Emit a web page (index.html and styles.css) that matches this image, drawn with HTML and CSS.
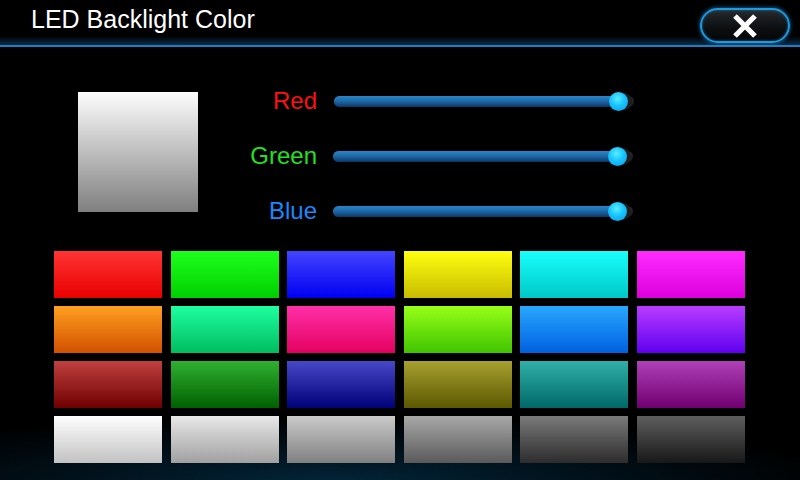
FILE: index.html
```html
<!DOCTYPE html>
<html>
<head>
<meta charset="utf-8">
<link rel="stylesheet" href="styles.css">
</head>
<body>
<div class="screen">
  <header class="header">
    <h1 class="title">LED Backlight Color</h1>
    <button class="close" aria-label="Close">
      <svg width="26" height="24" viewBox="0 0 26 24"><path d="M3 2 L23 22 M23 2 L3 22" stroke="#fff" stroke-width="5.2" stroke-linecap="butt"/></svg>
    </button>
  </header>
  <section class="top">
    <div class="preview"></div>
    <div class="sliders">
      <div class="srow"><span class="label red">Red</span><div class="track"><div class="fill"></div><div class="knob"></div></div></div>
      <div class="srow"><span class="label green">Green</span><div class="track"><div class="fill"></div><div class="knob"></div></div></div>
      <div class="srow"><span class="label blue">Blue</span><div class="track"><div class="fill"></div><div class="knob"></div></div></div>
    </div>
  </section>
  <section class="grid">
    <div class="sw c1"></div><div class="sw c2"></div><div class="sw c3"></div><div class="sw c4"></div><div class="sw c5"></div><div class="sw c6"></div>
    <div class="sw c7"></div><div class="sw c8"></div><div class="sw c9"></div><div class="sw c10"></div><div class="sw c11"></div><div class="sw c12"></div>
    <div class="sw c13"></div><div class="sw c14"></div><div class="sw c15"></div><div class="sw c16"></div><div class="sw c17"></div><div class="sw c18"></div>
    <div class="sw c19"></div><div class="sw c20"></div><div class="sw c21"></div><div class="sw c22"></div><div class="sw c23"></div><div class="sw c24"></div>
  </section>
</div>
</body>
</html>
```
FILE: styles.css
```css
html, body { margin: 0; padding: 0; background: #000; }
body { font-family: "Liberation Sans", Arial, sans-serif; }
.screen {
  width: 800px; height: 480px; overflow: hidden; position: relative;
  background:
    radial-gradient(ellipse 520px 70px at 330px 485px, rgba(2,40,62,0.95), rgba(2,30,48,0.5) 55%, rgba(0,0,0,0) 100%),
    #000;
}
.header {
  height: 45px;
  display: flex; align-items: flex-start; justify-content: space-between;
  border-bottom: 2px solid #1a80c4;
  background: linear-gradient(to bottom, rgba(0,0,0,0) 0, rgba(0,0,0,0) 36px, rgba(18,80,130,0.55) 45px);
  padding: 0 10px 0 31px;
}
.title {
  margin: 0; padding-top: 5px;
  font-weight: normal; font-size: 25px; line-height: 29px; color: #fff;
}
.close {
  margin-top: 8px; width: 90px; height: 35px; padding: 0;
  border-radius: 18px; border: 2px solid #1e9ae0;
  background: linear-gradient(to bottom, #262a2e, #0c0e10 60%, #050607);
  box-shadow: 0 0 4px rgba(30,150,230,0.8), inset 0 0 3px rgba(30,150,230,0.6);
  display: flex; align-items: center; justify-content: center;
}
.top {
  display: flex; align-items: flex-start;
  padding: 26px 0 0 78px;
}
.preview {
  margin-top: 19px;
  width: 120px; height: 120px;
  background: linear-gradient(to bottom, #fdfdfd, #7f7f7f);
}
.sliders { margin-left: 40px; display: flex; flex-direction: column; }
.srow { height: 55px; display: flex; align-items: center; }
.label { width: 79px; text-align: right; font-size: 24px; line-height: 28px; margin-right: 16px; }
.red { color: #ff1010; }
.green { color: #22e022; }
.blue { color: #1a88ff; }
.srow:nth-child(1) .track { margin-left: 1px; margin-top: 1px; }
.srow:nth-child(2) .track, .srow:nth-child(3) .track { margin-top: 1px; }
.track {
  position: relative; width: 300px; height: 11px; border-radius: 6px;
  background: linear-gradient(to bottom, #2a2a2a, #1a1a1a);
}
.fill {
  width: 290px; height: 11px; border-radius: 6px;
  background: linear-gradient(to bottom, #2b86c8 0%, #1d6aa8 45%, #124a80 80%, #0d3560 100%);
}
.knob {
  position: absolute; left: 275px; top: -4px;
  width: 19px; height: 19px; border-radius: 50%;
  background: radial-gradient(circle at 45% 35%, #5cecff 0%, #16c4ff 45%, #0a98e0 100%);
  box-shadow: 5px 0 0 -1px #1e1e1e;
}
.grid {
  margin: 13px 0 0 54px; width: 691px;
  display: grid; grid-template-columns: repeat(6, 108px);
  column-gap: 8.6px; row-gap: 8px;
}
.sw { height: 47px; }
.c1 { background: linear-gradient(#ff3434, #e80000); }
.c2 { background: linear-gradient(#1eff1e, #00d000); }
.c3 { background: linear-gradient(#4444ff, #0000f2); }
.c4 { background: linear-gradient(#ffff10, #c8bc00); }
.c5 { background: linear-gradient(#18fffc, #00c8c8); }
.c6 { background: linear-gradient(#ff2cff, #dc00dc); }
.c7 { background: linear-gradient(#ffa020, #d25000); }
.c8 { background: linear-gradient(#1effa0, #00bc60); }
.c9 { background: linear-gradient(#ff30a8, #e40060); }
.c10 { background: linear-gradient(#98ff18, #40c400); }
.c11 { background: linear-gradient(#28a8ff, #0060e0); }
.c12 { background: linear-gradient(#b83cff, #6000f0); }
.c13 { background: linear-gradient(#c04040, #700000); }
.c14 { background: linear-gradient(#30b030, #006000); }
.c15 { background: linear-gradient(#4848c8, #000078); }
.c16 { background: linear-gradient(#a8a030, #5c5800); }
.c17 { background: linear-gradient(#30b0a8, #006868); }
.c18 { background: linear-gradient(#b040b8, #700070); }
.c19 { background: linear-gradient(#ffffff, #c2c2c2); }
.c20 { background: linear-gradient(#e8e8e8, #a0a0a0); }
.c21 { background: linear-gradient(#cacaca, #808080); }
.c22 { background: linear-gradient(#a8a8a8, #5a5a5a); }
.c23 { background: linear-gradient(#7a7a7a, #2c2c2c); }
.c24 { background: linear-gradient(#5e5e5e, #181818); }
```
